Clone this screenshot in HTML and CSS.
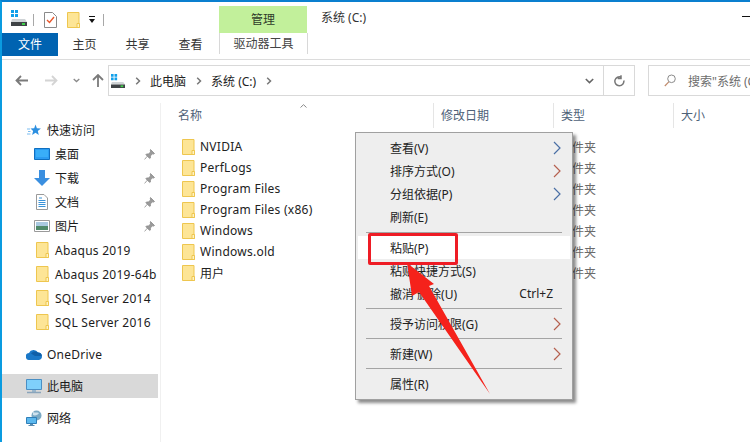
FILE: index.html
```html
<!DOCTYPE html>
<html lang="zh-CN">
<head>
<meta charset="utf-8">
<title>系统 (C:)</title>
<link rel="stylesheet" href="styles.css">
</head>
<body>
<svg class="defs" width="0" height="0" aria-hidden="true">
  <symbol id="folder" viewBox="0 0 13 16">
    <path d="M.5.5h11.5v11.5h.5v3.5H.5z" fill="#fde596" stroke="#eec64f"/>
    <path d="M10 11.5h2.5v4H10z" fill="#fff3c4" stroke="#eec64f"/>
  </symbol>
  <symbol id="drive" viewBox="0 0 16 18">
    <path d="M0 1h3v3H0zM4 1h3v3H4zM0 5h3v3H0zM4 5h3v3H4z" fill="#12a0ea"/>
    <path d="M1 10h13l2 3H0z" fill="#cfd3d6"/>
    <path d="M0 13h16v4H0z" fill="#3f4346"/>
    <path d="M11 14h3v2h-3z" fill="#3fd14a"/>
  </symbol>
  <symbol id="pin" viewBox="0 0 11 11">
    <path d="M6.5.5l4 4-1 .6-1-.3-2.200 2.200.2 1.800-.8.7L1.900 5.700l.7-.8 1.800.2 2.200-2.200-.3-1zM3.300 7.200L.6 10.400" fill="#9a9a9a" stroke="#8a8a8a" stroke-width=".8"/>
  </symbol>
  <symbol id="sub" viewBox="0 0 8 14"><path d="M1 1l6 6-6 6" fill="none" stroke="currentColor" stroke-width="1.200"/></symbol>
  <symbol id="crumb" viewBox="0 0 6 8"><path d="M1.200.8L4.500 4 1.200 7.200" fill="none" stroke="#777" stroke-width="1.500"/></symbol>
</svg>

<div class="window">
  <header class="titlebar">
    <svg class="qat-drive" width="16" height="18"><use href="#drive"/></svg>
    <i class="qat-sep"></i>
    <svg class="qat-doc" width="13" height="16" viewBox="0 0 13 16"><path d="M.5.5h8l4 4v11H.5z" fill="#fff" stroke="#8a8a8a"/><path d="M3 8l2.500 2.500L10 5" fill="none" stroke="#e8562a" stroke-width="1.400"/></svg>
    <svg class="qat-folder" width="13" height="16"><use href="#folder"/></svg>
    <svg class="qat-more" width="8" height="8" viewBox="0 0 8 8"><path d="M1 0h6v1H1zM1 3h6L4 7z" fill="#111"/></svg>
    <i class="qat-sep qat-sep-end"></i>
    <div class="manage">管理</div>
    <div class="title">系统 (C:)</div>
    <i class="minimize"></i>
  </header>

  <nav class="tabs">
    <div class="tab tab-file">文件</div>
    <div class="tab">主页</div>
    <div class="tab">共享</div>
    <div class="tab">查看</div>
    <div class="tab tab-tools">驱动器工具</div>
  </nav>

  <div class="addressrow">
    <div class="navbtns">
      <svg class="nav-back" width="13" height="11" viewBox="0 0 13 11"><path d="M6 1L1.500 5.500 6 10M2 5.500h11" fill="none" stroke="#7a7a7a" stroke-width="1.800"/></svg>
      <svg class="nav-fwd" width="13" height="11" viewBox="0 0 13 11"><path d="M7 1l4.500 4.500L7 10M11 5.500H0" fill="none" stroke="#d4d4d4" stroke-width="1.800"/></svg>
      <svg class="nav-down" width="7" height="5" viewBox="0 0 7 5"><path d="M.7 1l2.800 2.600L6.300 1" fill="none" stroke="#8a8a8a" stroke-width="1.300"/></svg>
      <svg class="nav-up" width="12" height="13" viewBox="0 0 12 13"><path d="M1 6l5-5 5 5M6 1.500V13" fill="none" stroke="#7a7a7a" stroke-width="1.800"/></svg>
    </div>
    <div class="address">
      <svg class="addr-drive" width="14" height="16"><use href="#drive"/></svg>
      <svg class="crumb" width="6" height="8"><use href="#crumb"/></svg>
      <span>此电脑</span>
      <svg class="crumb" width="6" height="8"><use href="#crumb"/></svg>
      <span>系统 (C:)</span>
      <svg class="crumb" width="6" height="8"><use href="#crumb"/></svg>
      <svg class="addr-drop" width="9" height="6" viewBox="0 0 9 6"><path d="M.8 1l3.700 3.600L8.200 1" fill="none" stroke="#666" stroke-width="1.600"/></svg>
      <div class="refresh"><svg width="11" height="12" viewBox="0 0 11 12"><path d="M9.800 5.500a4.500 4.500 0 1 1-2.500-3.300M7 .2v3.400h-3.300" fill="none" stroke="#777" stroke-width="1.500"/></svg></div>
    </div>
    <div class="search">
      <svg width="12" height="13" viewBox="0 0 12 13"><circle cx="7.500" cy="4.800" r="3.800" fill="none" stroke="#8a8a8a"/><path d="M4.800 7.800L.8 12" stroke="#c08a6a" stroke-width="1.200"/></svg>
      <span>搜索"系统 (C:)"</span>
    </div>
  </div>

  <div class="body">
    <aside class="sidebar">
      <div class="side-row top">
        <svg class="side-icon" width="14" height="13" viewBox="0 0 14 13"><path d="M8.500.5l1.400 3.800 4 .2-3.100 2.500 1 3.900-3.300-2.200-3.400 2.200 1-3.900L3.500 4.500l3.700-.2z" fill="#2c8fe0"/><path d="M0 5h3M1 7.500h2.500M0 10h3.500" stroke="#7bbcf0" stroke-width="1"/></svg>
        <span>快速访问</span>
      </div>
      <div class="side-row child">
        <svg class="side-icon" width="16" height="12" viewBox="0 0 16 12"><path d="M.5.5h15v11H.5z" fill="#2b9cf2" stroke="#0f6fc0"/><path d="M2 2h12v7H2z" fill="#39aef8"/></svg>
        <span>桌面</span>
        <svg class="pin" width="11" height="11"><use href="#pin"/></svg>
      </div>
      <div class="side-row child">
        <svg class="side-icon" width="16" height="16" viewBox="0 0 16 16"><path d="M5 0h6v8h5l-8 8-8-8h5z" fill="#3a8fe0"/></svg>
        <span>下载</span>
        <svg class="pin" width="11" height="11"><use href="#pin"/></svg>
      </div>
      <div class="side-row child">
        <svg class="side-icon doc" width="12" height="16" viewBox="0 0 12 16"><path d="M.5.5h7.500l3.500 3.500v11.500H.5z" fill="#fff" stroke="#9a9a9a"/><path d="M3 4h3M2.500 6.500h7M2.500 8.500h7M2.500 10.500h7M2.500 12.500h7" stroke="#3b93d8"/></svg>
        <span>文档</span>
        <svg class="pin" width="11" height="11"><use href="#pin"/></svg>
      </div>
      <div class="side-row child">
        <svg class="side-icon" width="16" height="12" viewBox="0 0 16 12"><path d="M.5.5h15v11H.5z" fill="#fff" stroke="#9a9a9a"/><path d="M2 2h12v4H2z" fill="#a9c9e0"/><path d="M2 6h12v4H2z" fill="#4f8a6a"/></svg>
        <span>图片</span>
        <svg class="pin" width="11" height="11"><use href="#pin"/></svg>
      </div>
      <div class="side-row child"><svg class="side-icon narrow" width="13" height="16"><use href="#folder"/></svg><span class="latin">Abaqus 2019</span></div>
      <div class="side-row child"><svg class="side-icon narrow" width="13" height="16"><use href="#folder"/></svg><span class="latin">Abaqus 2019-64b</span></div>
      <div class="side-row child"><svg class="side-icon narrow" width="13" height="16"><use href="#folder"/></svg><span class="latin">SQL Server 2014</span></div>
      <div class="side-row child"><svg class="side-icon narrow" width="13" height="16"><use href="#folder"/></svg><span class="latin">SQL Server 2016</span></div>
      <div class="side-row top spaced">
        <svg class="side-icon" width="16" height="11" viewBox="0 0 16 11"><path d="M3.500 11A3.500 3.500 0 0 1 3 4 5 5 0 0 1 12 3.500 3.800 3.800 0 0 1 13 11z" fill="#1a78c8"/><path d="M5 4.500A5 5 0 0 1 12 3.500 3.800 3.800 0 0 1 15.800 7H9z" fill="#0f5fa8"/></svg>
        <span class="latin">OneDrive</span>
      </div>
      <div class="side-row top spaced selected">
        <svg class="side-icon" width="16" height="15" viewBox="0 0 16 15"><path d="M.5.500h15v10H.5z" fill="#7fd0fb" stroke="#4a8fc4"/><path d="M6 11h4v2H6z" fill="#9ab6cc"/><path d="M1 13.500h14" stroke="#8aa4bb" stroke-width="1.500"/></svg>
        <span>此电脑</span>
      </div>
      <div class="side-row top spaced">
        <svg class="side-icon" width="16" height="16" viewBox="0 0 16 16"><circle cx="10.500" cy="5.500" r="5" fill="#7aa9c4"/><path d="M7 2c2 1 4 0 6 1-1 2-4 3-6 2z" fill="#cfe2ee"/><path d="M.5 7.500h10v6h-10z" fill="#5cb8ee" stroke="#2f7fb8"/><path d="M4 14h3v1H4zM2.500 15h6v1h-6z" fill="#5a8cb0"/></svg>
        <span>网络</span>
      </div>
    </aside>

    <main class="files">
      <span class="sort-mark"><svg width="7" height="4" viewBox="0 0 7 4"><path d="M.5 3.500L3.500.7l3 2.800" fill="none" stroke="#888"/></svg></span>
      <div class="columns">
        <div class="col col-name">名称</div>
        <div class="col col-date">修改日期</div>
        <div class="col col-type">类型</div>
        <div class="col col-size">大小</div>
      </div>
      <ul class="filelist">
        <li><svg width="13" height="16"><use href="#folder"/></svg><span class="fname latin">NVIDIA</span><span class="ftype">文件夹</span></li>
        <li><svg width="13" height="16"><use href="#folder"/></svg><span class="fname latin">PerfLogs</span><span class="ftype">文件夹</span></li>
        <li><svg width="13" height="16"><use href="#folder"/></svg><span class="fname latin">Program Files</span><span class="ftype">文件夹</span></li>
        <li><svg width="13" height="16"><use href="#folder"/></svg><span class="fname latin">Program Files (x86)</span><span class="ftype">文件夹</span></li>
        <li><svg width="13" height="16"><use href="#folder"/></svg><span class="fname latin">Windows</span><span class="ftype">文件夹</span></li>
        <li><svg width="13" height="16"><use href="#folder"/></svg><span class="fname latin">Windows.old</span><span class="ftype">文件夹</span></li>
        <li><svg width="13" height="16"><use href="#folder"/></svg><span class="fname">用户</span><span class="ftype">文件夹</span></li>
      </ul>
    </main>
  </div>

  <div class="menu">
    <div class="mi">查看(V)<svg class="blue" width="8" height="14"><use href="#sub"/></svg></div>
    <div class="mi">排序方式(O)<svg class="warm" width="8" height="14"><use href="#sub"/></svg></div>
    <div class="mi">分组依据(P)<svg class="blue" width="8" height="14"><use href="#sub"/></svg></div>
    <div class="mi">刷新(E)</div>
    <hr class="ms ms-first">
    <div class="mi hot">粘贴(P)</div>
    <div class="mi">粘贴快捷方式(S)</div>
    <div class="mi">撤消 删除(U)<span class="shortcut">Ctrl+Z</span></div>
    <hr class="ms">
    <div class="mi">授予访问权限(G)<svg class="warm" width="8" height="14"><use href="#sub"/></svg></div>
    <hr class="ms">
    <div class="mi">新建(W)<svg class="warm" width="8" height="14"><use href="#sub"/></svg></div>
    <hr class="ms">
    <div class="mi">属性(R)</div>
  </div>

  <div class="callout"></div>
  <svg class="arrow" width="750" height="442" viewBox="0 0 750 442"><path d="M407 263L434 284 429 286 490 394 419 292 412 296z" fill="#f5221b"/></svg>
</div>
</body>
</html>
```

FILE: styles.css
```css
* { box-sizing: border-box; }
html, body { margin: 0; padding: 0; }
body {
  width: 750px;
  height: 442px;
  overflow: hidden;
  background: #fff;
  font-family: "Noto Sans", "Noto Sans CJK SC", sans-serif;
  font-size: 12px;
  color: #1c1c1c;
}
.defs { position: absolute; }
svg { display: block; flex: none; }
.latin { letter-spacing: .25px; }

.window {
  position: relative;
  width: 750px;
  height: 442px;
  overflow: hidden;
  border-top: 2px solid #0a7fcf;
  border-left: 2px solid #0a9be0;
  background: #fff;
}

/* title bar */
.titlebar {
  display: flex;
  align-items: center;
  height: 31px;
}
.qat-drive { margin-left: 9px; }
.qat-sep { width: 1px; height: 12px; background: #a8a8a8; margin-left: 6px; margin-top: 4px; }
.qat-doc { margin-left: 10px; margin-top: 4px; }
.qat-folder { margin-left: 10px; margin-top: 4px; }
.qat-more { margin-left: 8px; margin-top: 4px; }
.qat-sep-end { margin-left: 7px; }
.manage {
  margin-left: 115px;
  align-self: flex-end;
  flex: none;
  width: 88px;
  height: 27px;
  line-height: 27px;
  text-align: center;
  background: #c2f09b;
  color: #2f3b2a;
}
.title { margin-left: 14px; color: #333; position: relative; top: -1px; }
.minimize { width: 8px; height: 1px; background: #111; margin-left: auto; margin-top: -2px; }

/* tabs */
.tabs {
  display: flex;
  height: 27px;
  border-bottom: 1px solid #dcdcdc;
}
.tab {
  flex: none;
  width: 53px;
  height: 23px;
  line-height: 23px;
  text-align: center;
  color: #333;
}
.tab-file { width: 56px; background: #0063b1; color: #fff; }
.tab-tools {
  width: 89px;
  margin-left: 2px;
  height: 21px;
  line-height: 21px;
  background: #fff;
  border-left: 1px solid #d8d8d8;
  border-right: 1px solid #d8d8d8;
  color: #444;
}

/* address row */
.addressrow {
  display: flex;
  height: 36px;
  padding-top: 5px;
}
.navbtns {
  display: flex;
  flex: none;
  align-items: center;
  width: 106px;
  height: 30px;
}
.nav-back { margin-left: 13px; }
.nav-fwd { margin-left: 17px; }
.nav-down { margin-left: 15px; }
.nav-up { margin-left: 12px; }
.address {
  display: flex;
  flex: none;
  align-items: center;
  width: 527px;
  height: 31px;
  border: 1px solid #d9d9d9;
  padding-left: 2px;
  color: #222;
}
.addr-drive { margin-right: 10px; }
.crumb { margin-right: 9px; }
.address span { margin-right: 10px; }
.addr-drop { margin-left: auto; margin-right: 9px; }
.refresh {
  display: flex;
  align-items: center;
  justify-content: center;
  width: 31px;
  height: 29px;
  border-left: 1px solid #d9d9d9;
}
.search {
  display: flex;
  align-items: center;
  flex: none;
  width: 220px;
  height: 31px;
  margin-left: 13px;
  border: 1px solid #d9d9d9;
  padding-left: 15px;
  color: #6d6d6d;
}
.search span { margin-left: 12px; white-space: nowrap; }

/* body */
.body {
  display: flex;
  height: 346px;
}
.sidebar {
  flex: none;
  width: 159px;
  margin-top: 7px;
  padding-top: 15px;
  border-right: 1px solid #f0f0f0;
}
.side-row {
  display: flex;
  align-items: center;
  height: 24px;
  width: 156px;
  white-space: nowrap;
}
.side-row.top { padding-left: 24px; }
.side-row.child { padding-left: 32px; }
.side-row .side-icon { width: 16px; margin-right: 5px; }
.side-row .side-icon.narrow { width: 13px; margin-right: 6px; margin-left: 2px; }
.side-row .side-icon.doc { width: 12px; margin-left: 2px; margin-right: 7px; }
.spaced { margin-top: 8px; }
.selected { background: #d9d9d9; }
.pin { margin-left: auto; margin-right: 3px; }

.files { position: relative; flex: 1; min-width: 0; padding-top: 7px; }
.sort-mark { position: absolute; left: 139px; top: 8px; }
.columns { display: flex; height: 25px; }
.col {
  flex: none;
  height: 25px;
  line-height: 26px;
  padding-left: 7px;
  color: #4e6178;
  border-left: 1px solid #e5e5e5;
}
.col-name { width: 272px; border-left: 0; padding-left: 17px; }
.col-date, .col-type, .col-size { width: 120px; }
.filelist {
  list-style: none;
  margin: 8px 0 0;
  padding: 0;
}
.filelist li {
  display: flex;
  align-items: center;
  height: 21px;
  padding-left: 21px;
  white-space: nowrap;
}
.fname { flex: none; margin-left: 5px; width: 360px; color: #222; }
.ftype { color: #6a6a6a; }

/* context menu */
.menu {
  position: absolute;
  left: 353px;
  top: 130px;
  width: 218px;
  height: 268px;
  padding: 3px 2px 4px;
  background: #eeeeee;
  border: 1px solid #a0a0a0;
  box-shadow: 3px 3px 3px rgba(0, 0, 0, .45);
  color: #222;
}
.mi {
  display: flex;
  align-items: center;
  height: 23px;
  padding-left: 32px;
  padding-right: 9px;
}
.mi svg { margin-left: auto; }
.blue { color: #4a6fa5; }
.warm { color: #b5604f; }
.shortcut { margin-left: auto; margin-right: 8px; }
.hot { background: #fff; }
.ms {
  height: 1px;
  margin: 3px 8px;
  border: 0;
  background: #a4a4a4;
}
.ms-first { margin: 4px 8px 3px; }

/* annotations */
.callout {
  position: absolute;
  left: 366px;
  top: 231px;
  width: 90px;
  height: 32px;
  border: 3px solid #ee1c25;
  border-radius: 2px;
}
.arrow { position: absolute; left: -2px; top: -2px; }
```
